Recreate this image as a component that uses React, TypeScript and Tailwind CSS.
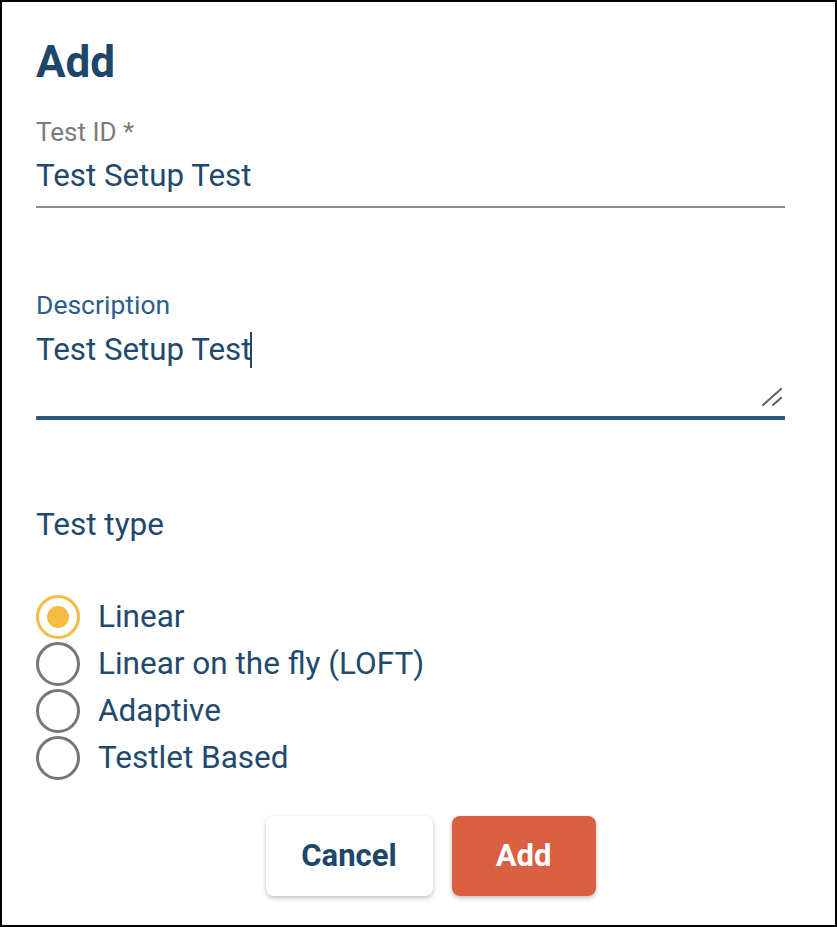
import React from "react";

const font = { fontFamily: "Roboto, 'Noto Sans', sans-serif" };

function Radio({ checked, label }: { checked?: boolean; label: string }) {
  return (
    <div className="flex items-center h-[47px]">
      <div className="w-[46px] h-[46px] flex items-center justify-center">
        <div
          className={
            checked
              ? "w-[44px] h-[44px] rounded-full border-[3px] border-[#f6bb44] flex items-center justify-center"
              : "w-[44px] h-[44px] rounded-full border-[3px] border-[#777777]"
          }
        >
          {checked && <div className="w-[22px] h-[22px] rounded-full bg-[#f6bb44]" />}
        </div>
      </div>
      <span className="ml-[17px] text-[31.5px] text-[#1f4a6e] leading-none">{label}</span>
    </div>
  );
}

export default function App() {
  return (
    <div
      className="w-[837px] h-[927px] border-2 border-black bg-white box-border overflow-hidden"
      style={font}
    >
      <div className="pl-[34px] pr-[50px] pt-[35px]">
        <h1 className="text-[44px] font-bold text-[#1d4668] leading-[50px]">Add</h1>

        <div className="mt-[31px]">
          <div className="text-[26px] text-[#7b7b7b] leading-[28px]">Test ID *</div>
          <div className="text-[31.3px] text-[#1f4a6e] leading-[36px] mt-[12px]">Test Setup Test</div>
          <div className="h-[2px] bg-[#8c8c8c] mt-[12px]" />
        </div>

        <div className="mt-[82px] relative">
          <div className="text-[26.5px] text-[#2e5e86] leading-[30px]">Description</div>
          <div className="text-[31.3px] text-[#1f4a6e] leading-[36px] mt-[12px] flex items-center">
            <span>Test Setup Test</span>
            <span className="inline-block w-[2px] h-[36px] bg-[#1f4a6e] -ml-[1px]" />
          </div>
          <div className="h-[39px] flex justify-end pr-[2px] items-end">
            <svg width="22" height="20" viewBox="0 0 22 20">
              <line x1="2" y1="18" x2="20" y2="2" stroke="#666" strokeWidth="2.2" strokeLinecap="round" />
              <line x1="12" y1="18" x2="20" y2="11" stroke="#666" strokeWidth="2.2" strokeLinecap="round" />
            </svg>
          </div>
          <div className="h-[4px] bg-[#2d5a80] mt-[9px] rounded-l-[1px]" />
        </div>

        <div className="mt-[87px] text-[31.5px] text-[#1f4a6e] leading-[36px]">Test type</div>

        <div className="mt-[50px] flex flex-col -ml-[1px]">
          <Radio checked label="Linear" />
          <Radio label="Linear on the fly (LOFT)" />
          <Radio label="Adaptive" />
          <Radio label="Testlet Based" />
        </div>
      </div>

      <div className="flex justify-center gap-[19px] mt-[35px] pl-[24px]">
        <button className="w-[167px] h-[80px] rounded-[8px] bg-white shadow-[0_2px_5px_rgba(0,0,0,0.25)] text-[31px] font-bold text-[#1d4668]">
          Cancel
        </button>
        <button className="w-[144px] h-[80px] rounded-[8px] bg-[#d95f42] shadow-[0_2px_5px_rgba(0,0,0,0.25)] text-[31px] font-bold text-white">
          Add
        </button>
      </div>
    </div>
  );
}
